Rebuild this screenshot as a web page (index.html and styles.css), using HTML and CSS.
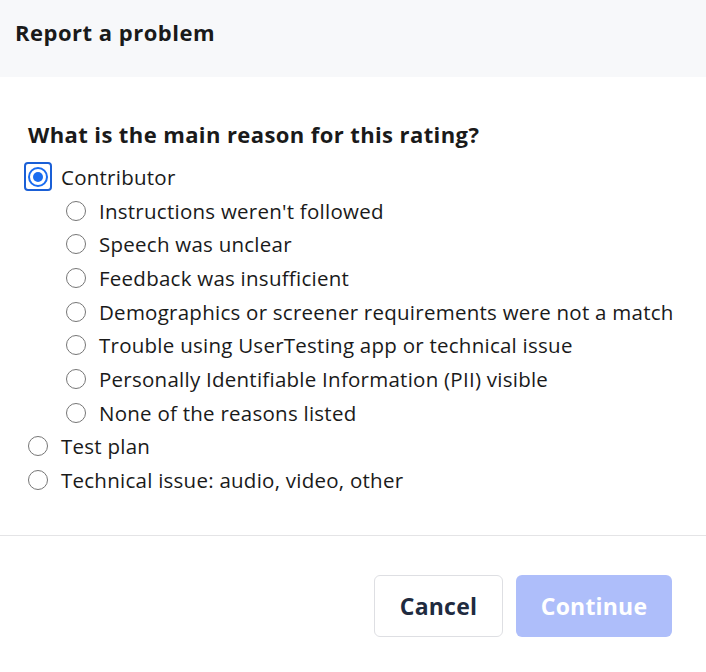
FILE: index.html
```html
<!DOCTYPE html>
<html lang="en">
<head>
  <meta charset="UTF-8" />
  <meta name="viewport" content="width=device-width, initial-scale=1.0" />
  <title>Report a problem</title>
  <link rel="stylesheet" href="styles.css">
</head>
<body>
  <div class="modal">
    <header class="modal-header">
      <h2>Report a problem</h2>
    </header>

    <form class="modal-body">
      <h3>What is the main reason for this rating?</h3>

      <label class="option">
        <span class="focus-ring"><span class="radio checked"></span></span>
        <span>Contributor</span>
      </label>
      <div class="sub-options">
        <label class="option"><span class="radio"></span><span>Instructions weren't followed</span></label>
        <label class="option"><span class="radio"></span><span>Speech was unclear</span></label>
        <label class="option"><span class="radio"></span><span>Feedback was insufficient</span></label>
        <label class="option"><span class="radio"></span><span>Demographics or screener requirements were not a match</span></label>
        <label class="option"><span class="radio"></span><span>Trouble using UserTesting app or technical issue</span></label>
        <label class="option"><span class="radio"></span><span>Personally Identifiable Information (PII) visible</span></label>
        <label class="option"><span class="radio"></span><span>None of the reasons listed</span></label>
      </div>
      <label class="option"><span class="radio"></span><span>Test plan</span></label>
      <label class="option"><span class="radio"></span><span>Technical issue: audio, video, other</span></label>
    </form>

    <footer class="modal-footer">
      <button type="button" class="btn btn-cancel">Cancel</button>
      <button type="button" class="btn btn-continue" disabled>Continue</button>
    </footer>
  </div>
</body>
</html>
```

FILE: styles.css
```css
* {
  box-sizing: border-box;
}

body {
  margin: 0;
  font-family: 'Open Sans', sans-serif;
  color: #1a1a1a;
  background: #ffffff;
}

.modal {
  width: 706px;
}

.modal-header {
  background-color: #f7f8fa;
  height: 77px;
  padding: 17px 15px 0;
}

.modal-header h2 {
  margin: 0;
  font-size: 22px;
  font-weight: 700;
  line-height: 30px;
  letter-spacing: 0.5px;
}

.modal-body {
  padding: 42px 28px 38px;
  border-bottom: 1px solid #e4e4e6;
}

.modal-body h3 {
  margin: 0 0 11px;
  font-size: 22px;
  font-weight: 700;
  line-height: 30px;
  letter-spacing: 0.4px;
}

.option {
  display: flex;
  align-items: center;
  gap: 13px;
  height: 33.7px;
  font-size: 20.5px;
  letter-spacing: 0.25px;
  cursor: pointer;
}

.radio {
  position: relative;
  flex: none;
  width: 20px;
  height: 20px;
  border: 1.5px solid #767676;
  border-radius: 50%;
  background: #fff;
}

.radio.checked {
  border: 2px solid #1a6cf0;
}

.radio.checked::after {
  content: "";
  position: absolute;
  top: 3px;
  left: 3px;
  width: 10px;
  height: 10px;
  border-radius: 50%;
  background: #1a6cf0;
}

.focus-ring {
  display: flex;
  align-items: center;
  justify-content: center;
  width: 28px;
  height: 29px;
  margin: 0 -4px;
  border: 2px solid #1a5fd6;
  border-radius: 4px;
}

.sub-options {
  padding-left: 38px;
}

.modal-footer {
  display: flex;
  justify-content: flex-end;
  gap: 13px;
  padding: 39px 34px 0;
}

.btn {
  height: 62px;
  border-radius: 6px;
  font-family: inherit;
  font-size: 23px;
  font-weight: 700;
  letter-spacing: 0.2px;
  cursor: pointer;
}

.btn-cancel {
  width: 129px;
  background: #fff;
  border: 1px solid #dedfe3;
  color: #1f2b40;
}

.btn-continue {
  width: 156px;
  background: #aebefa;
  border: none;
  color: #fff;
}
```
